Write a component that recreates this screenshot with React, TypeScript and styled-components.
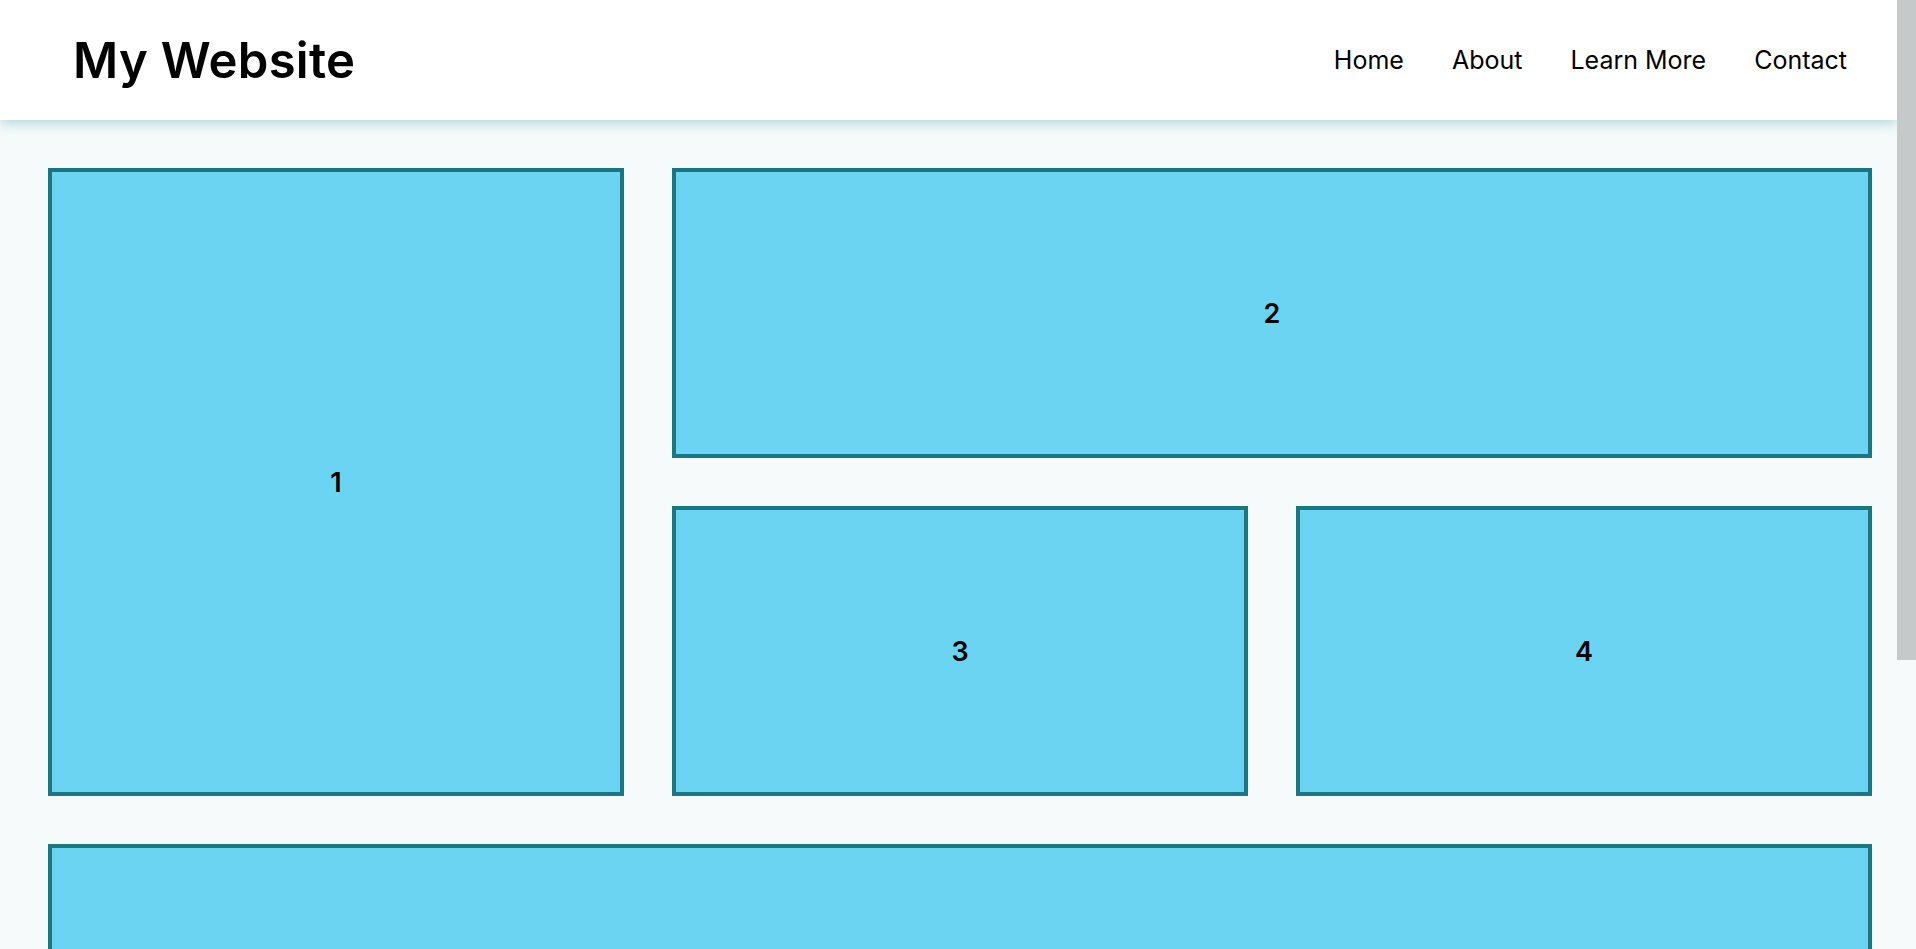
import React from 'react';
import styled, { createGlobalStyle } from 'styled-components';

const teal = '#18777f';
const sky = '#6bd4f2';
const pageBg = '#f6fafb';

const GlobalStyle = createGlobalStyle`
  * {
    box-sizing: border-box;
  }

  html, body {
    margin: 0;
    padding: 0;
    background: ${pageBg};
    font-family: Inter, "Noto Sans", sans-serif;
    color: #000;
  }

  body {
    padding-right: 19px;
  }
`;

// the browser draws no scrollbar here, so this stands in for the one in the design
const ScrollTrack = styled.div`
  position: fixed;
  top: 0;
  right: 0;
  width: 19px;
  height: 100vh;
  background: ${pageBg};
  z-index: 5;
`;

const ScrollThumb = styled.div`
  width: 100%;
  height: 660px;
  background: #c6c9ca;
`;

const Header = styled.header`
  height: 120px;
  background: #fff;
  display: flex;
  align-items: center;
  justify-content: space-between;
  padding: 0 50px 0 73px;
  box-shadow: 0 3px 12px rgba(24, 140, 150, 0.32);
  position: relative;
  z-index: 1;
`;

const Title = styled.h1`
  margin: 0;
  font-size: 49px;
  font-weight: 600;
  letter-spacing: 0.3px;
`;

const Nav = styled.nav`
  display: flex;
  gap: 48px;
`;

const NavLink = styled.a`
  font-size: 25px;
  font-weight: 400;
  color: #000;
  text-decoration: none;
  cursor: pointer;
`;

const Grid = styled.main`
  display: grid;
  grid-template-columns: repeat(3, 1fr);
  grid-template-rows: 290px 290px 472px;
  gap: 48px;
  padding: 48px 25px 48px 48px;
`;

const Box = styled.div<{ col?: string; row?: string }>`
  grid-column: ${(p) => p.col || 'auto'};
  grid-row: ${(p) => p.row || 'auto'};
  background: ${sky};
  border: 4px solid ${teal};
  display: flex;
  align-items: center;
  justify-content: center;
  font-size: 27px;
  font-weight: 600;
`;

const links = ['Home', 'About', 'Learn More', 'Contact'];

export default function App() {
  return (
    <>
      <GlobalStyle />
      <Header>
        <Title>My Website</Title>
        <Nav>
          {links.map((l) => (
            <NavLink key={l}>{l}</NavLink>
          ))}
        </Nav>
      </Header>
      <Grid>
        <Box row="span 2">1</Box>
        <Box col="span 2">2</Box>
        <Box>3</Box>
        <Box>4</Box>
        <Box col="1 / -1"></Box>
      </Grid>
      <ScrollTrack>
        <ScrollThumb />
      </ScrollTrack>
    </>
  );
}
